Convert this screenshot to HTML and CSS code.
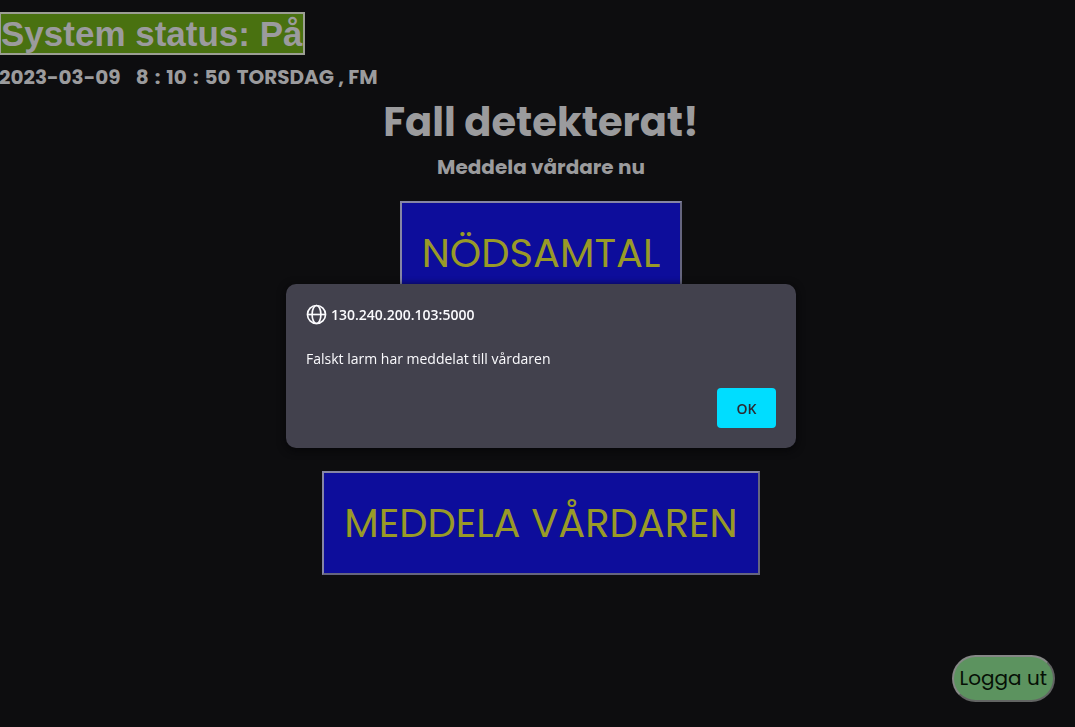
FILE: index.html
```html
<!DOCTYPE html>
<html lang="sv">
<head>
<meta charset="utf-8">
<meta name="viewport" content="width=device-width, initial-scale=1">
<title>Falldetektering</title>
<link rel="stylesheet" href="styles.css">
</head>
<body>
<div class="page">
  <header class="header">
    <h1 class="status">System status: På</h1>
    <p class="clock">
      <span>2023-03-09</span>
      <span class="time"><span>8</span><span>:</span><span>10</span><span>:</span><span>50</span><span>TORSDAG , FM</span></span>
    </p>
  </header>
  <main class="main">
    <h2 class="title">Fall detekterat!</h2>
    <p class="subtitle">Meddela vårdare nu</p>
    <div class="actions">
      <button class="action" type="button">NÖDSAMTAL</button>
      <button class="action" type="button">MEDDELA VÅRDAREN</button>
    </div>
  </main>
  <footer class="footer">
    <button class="logout" type="button">Logga ut</button>
  </footer>
</div>
<div class="overlay">
  <dialog class="alert" open aria-labelledby="origin">
    <div class="origin">
      <svg class="globe" viewBox="0 0 20 20" aria-hidden="true">
        <circle cx="10" cy="10" r="8.6"/>
        <ellipse cx="10" cy="10" rx="4.2" ry="8.6"/>
        <path d="M1.5 10H18.5"/>
      </svg>
      <span id="origin">130.240.200.103:5000</span>
    </div>
    <p class="message">Falskt larm har meddelat till vårdaren</p>
    <button class="ok" type="button">OK</button>
  </dialog>
</div>
</body>
</html>
```
FILE: styles.css
```css
* {
  box-sizing: border-box;
}

body {
  margin: 0;
  background: #0d0d0f;
  color: #9b9b9d;
  font-family: Poppins, Inter, sans-serif;
}

h1, h2, p {
  margin: 0;
}

.page {
  display: flex;
  flex-direction: column;
  min-height: 100vh;
  padding: 12px 20px 25px 0;
}

.header {
  margin-left: -1px;
}

.status {
  width: fit-content;
  border: 2px solid #9c9e94;
  background: #497110;
  font: bold 35px/39px "Liberation Sans", Arial, sans-serif;
}

.clock {
  display: flex;
  gap: 15px;
  margin-top: 7px;
  font-size: 20px;
  line-height: 30px;
  font-weight: 700;
}

.time {
  display: flex;
  gap: 6px;
}

.main {
  display: flex;
  flex-direction: column;
  align-items: center;
  margin-right: -20px;
  padding-left: 7px;
}

.title {
  font-size: 40px;
  line-height: 60px;
  font-weight: 700;
}

.subtitle {
  font-size: 20px;
  line-height: 30px;
  font-weight: 700;
}

.actions {
  display: flex;
  flex-direction: column;
  align-items: center;
  gap: 166px;
  margin-top: 19px;
}

.action {
  padding: 20px;
  border: 2px solid;
  border-color: #8686a4 #65657f #65657f #8686a4;
  background: #0d0d9b;
  color: #999a27;
  font-family: inherit;
  font-size: 40px;
  line-height: 60px;
  white-space: nowrap;
}

.footer {
  display: flex;
  justify-content: flex-end;
  margin-top: auto;
}

.logout {
  min-width: 103px;
  padding: 6px;
  border: 2px solid;
  border-color: #858786 #626463 #626463 #858786;
  border-radius: 25px;
  background: #5c935f;
  color: #061006;
  font-family: inherit;
  font-size: 20px;
  line-height: 31px;
}

.overlay {
  position: fixed;
  inset: 0;
  display: flex;
  align-items: center;
  justify-content: center;
  padding: 5px 0 0 7px;
}

.alert {
  position: static;
  display: flex;
  flex-direction: column;
  width: 510px;
  max-width: 100%;
  margin: 0;
  padding: 20px;
  border: 0;
  border-radius: 10px;
  background: #42414d;
  box-shadow: 0 2px 8px #060608;
  color: #fbfbfe;
  font-family: "Segoe UI", "Open Sans", sans-serif;
  font-size: 14px;
  line-height: 20px;
}

.origin {
  display: flex;
  align-items: center;
  gap: 4px;
  font-weight: 600;
}

.globe {
  width: 21px;
  height: 21px;
  fill: none;
  stroke: #fbfbfe;
  stroke-width: 1.6;
}

.message {
  margin-top: 24px;
}

.ok {
  align-self: flex-end;
  width: 59px;
  height: 40px;
  margin-top: 19px;
  border: 0;
  border-radius: 4px;
  background: #00ddff;
  color: #2b2a33;
  font-family: inherit;
  font-size: 14px;
  font-weight: 600;
}
```
